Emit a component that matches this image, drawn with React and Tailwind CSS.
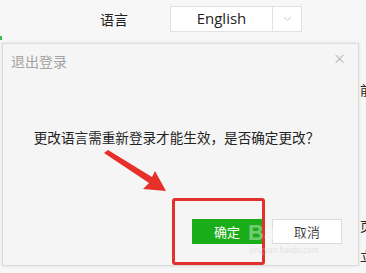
export default function App() {
  const font = { fontFamily: '"Microsoft YaHei", "Noto Sans CJK SC", "Noto Sans", sans-serif' };
  return (
    <div className="relative w-[366px] h-[273px] overflow-hidden bg-[#f7f7f7]" style={font}>
      {/* top settings row */}
      <div className="flex items-center h-[38px] pl-[100px]">
        <span className="text-[14px] text-[#222] w-[70px]">语言</span>
        <div className="flex h-[26px] w-[132px] border border-[#e2e2e2] bg-white -mt-[1px]">
          <div className="flex-1 flex items-center justify-center text-[15px] text-[#222]" style={{ fontFamily: '"Open Sans", "Noto Sans", sans-serif' }}>English</div>
          <div className="w-[29px] border-l border-[#e2e2e2] flex items-center justify-center">
            <svg width="9" height="6" viewBox="0 0 9 6"><path d="M1 1 L4.5 4.5 L8 1" fill="none" stroke="#c8c8c8" strokeWidth="1" /></svg>
          </div>
        </div>
      </div>
      {/* right edge clipped text */}
      <div className="absolute left-[360px] top-[80px] text-[13px] text-[#222]">前</div>
      <div className="absolute left-[360px] top-[216px] text-[13px] text-[#222]">页</div>
      <div className="absolute left-[360px] top-[246px] text-[13px] text-[#222]">立</div>
      <div className="absolute left-0 top-[36px] w-[2px] h-[4px] bg-[#3fb950]" />
      {/* dialog */}
      <div className="absolute left-[2px] top-[43px] w-[357px] h-[223px] bg-[#f5f5f5] border border-[#dcdcdc] shadow-[0_0_3px_rgba(0,0,0,0.12)] flex flex-col">
        <div className="flex items-center justify-between h-[34px] pl-[8px] pr-[12px]">
          <span className="text-[14px] text-[#a3a3a3]">退出登录</span>
          <span className="text-[13px] text-[#b0b0b0] -mt-[6px]">×</span>
        </div>
        <div className="flex justify-center mt-[49px] text-[13.6px] text-[#222] pr-[8px]">
          更改语言需重新登录才能生效，是否确定更改？
        </div>
        <div className="flex justify-end gap-[10px] mt-[72px] pr-[16px]">
          <div className="w-[70px] h-[25px] bg-[#1aad19] text-white text-[13px] flex items-center justify-center">确定</div>
          <div className="w-[70px] h-[25px] bg-white border border-[#dcdcdc] text-[#333] text-[13px] flex items-center justify-center">取消</div>
        </div>
      </div>
      {/* red highlight box */}
      <div className="absolute left-[172px] top-[198px] w-[93px] h-[67px] border-[3px] border-[#e0312a] rounded-[3px]" />
      {/* red arrow */}
      <svg className="absolute left-0 top-0" width="366" height="273" viewBox="0 0 366 273">
        <polygon points="104,153 108,150 152,177 155,171 166,191 143,189 149,183" fill="#e8302a" />
      </svg>
      {/* watermark */}
      <div className="absolute left-[248px] top-[222px] text-[22px] font-bold text-white/40 leading-none" style={{ fontFamily: '"Liberation Sans", sans-serif' }}>Baidu<span className="text-[16px] font-normal">经验</span></div>
      <div className="absolute left-[250px] top-[246px] text-[8px] text-[#ccc]/50 leading-none">jingyan.baidu.com</div>
    </div>
  );
}
